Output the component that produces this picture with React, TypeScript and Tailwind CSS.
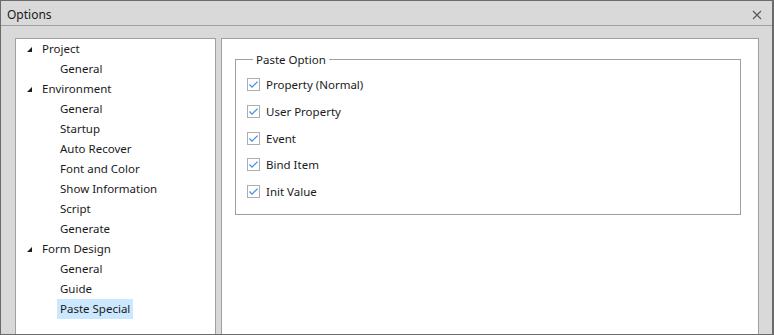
import React from "react";

type TreeNode = {
    label: string;
    children?: string[];
};

const tree: TreeNode[] = [
    { label: "Project", children: ["General"] },
    { label: "Environment", children: ["General", "Startup", "Auto Recover", "Font and Color", "Show Information", "Script", "Generate"] },
    { label: "Form Design", children: ["General", "Guide", "Paste Special"] },
];

const pasteOptions = ["Property (Normal)", "User Property", "Event", "Bind Item", "Init Value"];

function Expander() {
    return (
        <svg width="5" height="5" viewBox="0 0 5 5" className="shrink-0">
            <polygon points="5,0 5,5 0,5" fill="#1e1e1e" />
        </svg>
    );
}

function CheckBox() {
    return (
        <span className="flex h-[13px] w-[13px] shrink-0 items-center justify-center border border-[#adadad] bg-white">
            <svg width="11" height="11" viewBox="0 0 11 11">
                <polyline points="1.5,5.5 4,8.2 9.6,2.6" fill="none" stroke="#3d8fe8" strokeWidth="1.2" />
            </svg>
        </span>
    );
}

export default function App() {
    return (
        <div
            className="flex h-[335px] w-[774px] flex-col overflow-hidden border-t border-b border-l border-r-2 border-[#6b6b6b] bg-[#d9d9d9] text-[11.5px] text-[#1a1a1a]"
            style={{ fontFamily: '"Noto Sans", "Open Sans", sans-serif' }}
        >
            {/* title bar */}
            <div className="flex h-[25px] shrink-0 items-center justify-between border-b border-[#a0a0a0] pl-[6px] pr-[10px] pt-[3px]">
                <span className="text-[12px]">Options</span>
                <svg width="10" height="10" viewBox="0 0 10 10">
                    <path d="M1 1 L9 9 M9 1 L1 9" stroke="#555" strokeWidth="1.1" />
                </svg>
            </div>

            {/* body */}
            <div className="flex min-h-0 flex-1 gap-[5px] pl-[14px] pr-[13px] pt-[12px]">
                {/* tree */}
                <div className="w-[201px] shrink-0 border-t border-l border-r border-[#a0a0a0] bg-white">
                    {tree.map((node) => (
                        <div key={node.label}>
                            <div className="flex h-[20px] items-center gap-[10px] pl-[11px]">
                                <Expander />
                                <span>{node.label}</span>
                            </div>
                            {node.children?.map((child) => (
                                <div key={child} className="flex h-[20px] items-center pl-[41px]">
                                    <span className={child === "Paste Special" && node.label === "Form Design" ? "bg-[#cce8ff] px-[3px] leading-[20px]" : "px-[3px]"}>
                                        {child}
                                    </span>
                                </div>
                            ))}
                        </div>
                    ))}
                </div>

                {/* settings */}
                <div className="flex-1 border-t border-l border-r border-[#a0a0a0] bg-white pl-[13px] pr-[17px] pt-[12px]">
                    <fieldset className="h-[164px] border border-[#a0a0a0] pl-[11px]">
                        <legend className="ml-[6px] px-[3px]">Paste Option</legend>
                        <div className="flex flex-col pt-[3px]">
                            {pasteOptions.map((opt) => (
                                <label key={opt} className="flex h-[26.75px] items-center gap-[6px]">
                                    <CheckBox />
                                    <span>{opt}</span>
                                </label>
                            ))}
                        </div>
                    </fieldset>
                </div>
            </div>
        </div>
    );
}
